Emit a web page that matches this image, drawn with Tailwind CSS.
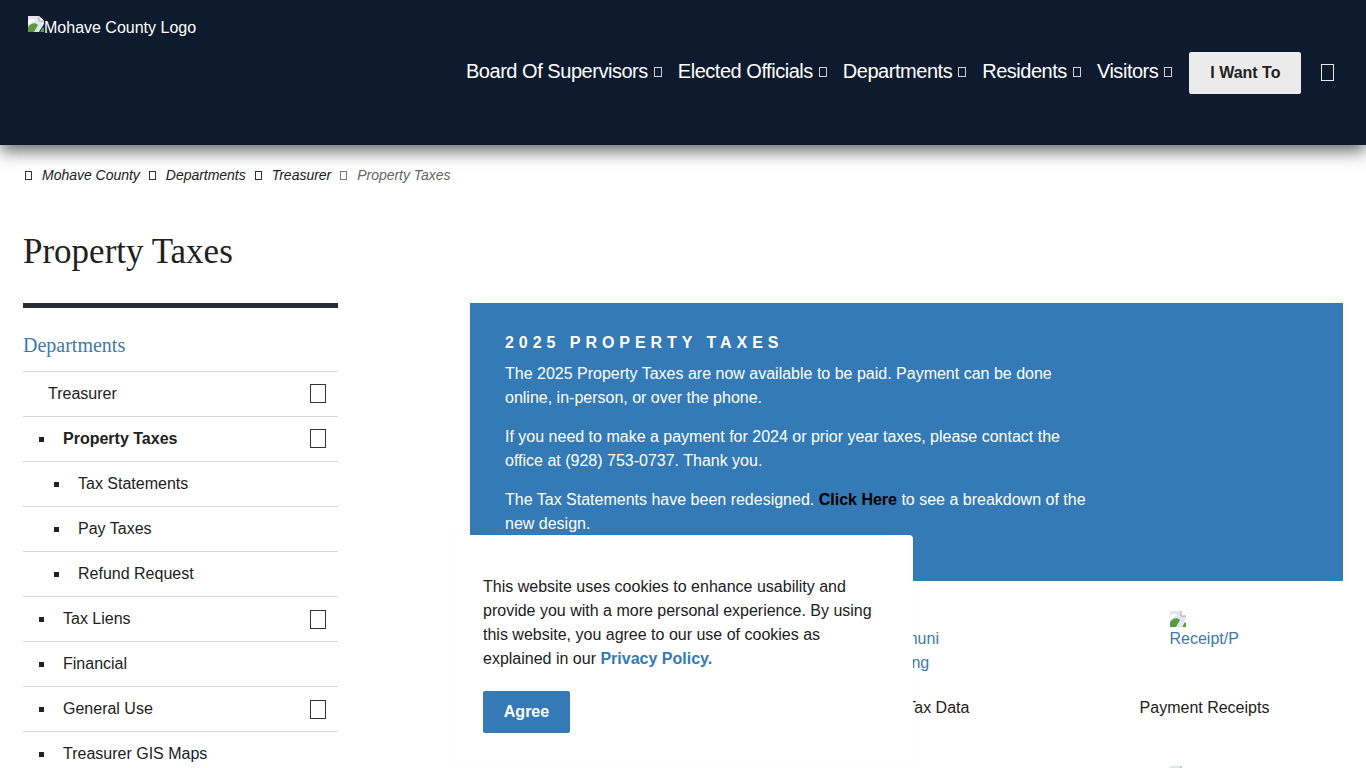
<!DOCTYPE html>
<html lang="en"><head><meta charset="utf-8"><title>Property Taxes</title>
<script src="https://cdn.jsdelivr.net/npm/@tailwindcss/browser@4"></script></head>
<body class="bg-white">
<svg class="hidden"><defs><symbol id="broken" viewBox="0 0 16 16"><path d="M0 0H11L16 5V8L11 16H0Z" fill="#dfe6f2"/><path d="M11 0V5H16Z" fill="#fff"/><path d="M11 0V5H16" fill="none" stroke="#a8a8a8"/><path d="M0 16V11C3 7 7 6 10 9L6 16Z" fill="#5b9a3f"/><path d="M0 5C3 2 7 3 8 5C5 5 2 7 0 9Z" fill="#fff"/><path d="M12 16L15 11L16 12V16Z" fill="#5b9a3f"/></symbol></defs></svg>
<div class="relative h-[768px] w-[1366px] overflow-hidden font-['Liberation_Sans',Arial,sans-serif] text-[16px] text-[#212121]">
  <header class="relative z-10 h-[145px] bg-[#0e1a2d] shadow-[0_6px_16px_rgba(0,0,0,0.6)]">
    <div class="flex items-start pl-[28px] pt-[16px] text-white">
      <svg class="h-4 w-4 shrink-0"><use href="#broken"/></svg><span class="mt-[1px] leading-[22px]">Mohave County Logo</span>
    </div>
    <nav class="absolute left-[466px] top-[52px] flex h-[42px] items-center text-[20px] tracking-[-0.47px] text-white">
      <a class="mb-[4px] flex items-center">Board Of Supervisors<span class="ml-[6px] mt-[2px] h-[10px] w-[8px] border border-white/80"></span></a>
      <a class="mb-[4px] ml-[16px] flex items-center">Elected Officials<span class="ml-[6px] mt-[2px] h-[10px] w-[8px] border border-white/80"></span></a>
      <a class="mb-[4px] ml-[16px] flex items-center">Departments<span class="ml-[6px] mt-[2px] h-[10px] w-[8px] border border-white/80"></span></a>
      <a class="mb-[4px] ml-[16px] flex items-center">Residents<span class="ml-[6px] mt-[2px] h-[10px] w-[8px] border border-white/80"></span></a>
      <a class="mb-[4px] ml-[16px] flex items-center">Visitors<span class="ml-[6px] mt-[2px] h-[10px] w-[8px] border border-white/80"></span></a>
      <a class="ml-[17px] flex h-[42px] w-[112px] items-center justify-center rounded-[2px] bg-[#ebebeb] text-[16px] font-bold tracking-normal text-[#212121]">I Want To</a>
      <span class="mb-[2px] ml-[20px] h-[17px] w-[13px] border border-white/90"></span>
    </nav>
  </header>

  <div class="flex h-[60px] items-center gap-[6px] pl-[25px] pt-[1px] text-[14px] italic tracking-[-0.02px] text-[#212121]">
    <span class="h-[9px] w-[7px] border border-[#333]"></span><a class="ml-[4px]">Mohave County</a>
    <span class="ml-[3px] h-[9px] w-[7px] border border-[#333]"></span><a class="ml-[4px]">Departments</a>
    <span class="ml-[3px] h-[9px] w-[7px] border border-[#333]"></span><a class="ml-[4px]">Treasurer</a>
    <span class="ml-[3px] h-[9px] w-[7px] border border-[#777]"></span><span class="ml-[4px] text-[#666]">Property Taxes</span>
  </div>

  <h1 class="ml-[23px] mt-[22px] font-['Liberation_Serif',serif] text-[35px] font-normal leading-[50px]">Property Taxes</h1>

  <div class="mt-[26px] flex items-start pl-[23px] pr-[23px]">
    <aside class="w-[315px] shrink-0 border-t-[5px] border-[#272c35]">
      <h2 class="h-[63px] pt-[25px] font-['Liberation_Serif',serif] text-[20px] font-normal leading-[24px] text-[#4079ab]">Departments</h2>
      <ul>
        <li class="flex h-[45px] items-center justify-between border-t border-[#d8d8d8] pl-[25px] pr-[12px]"><span>Treasurer</span><span class="mb-[2px] h-[19px] w-[16px] border border-[#333]"></span></li>
        <li class="flex h-[45px] items-center justify-between border-t border-[#d8d8d8] pl-[16px] pr-[12px]"><span class="flex items-center"><i class="mr-[19px] h-[5px] w-[5px] bg-[#222]"></i><b>Property Taxes</b></span><span class="mb-[2px] h-[19px] w-[16px] border border-[#333]"></span></li>
        <li class="flex h-[45px] items-center border-t border-[#d8d8d8] pl-[31px]"><i class="mr-[19px] h-[5px] w-[5px] bg-[#222]"></i>Tax Statements</li>
        <li class="flex h-[45px] items-center border-t border-[#d8d8d8] pl-[31px]"><i class="mr-[19px] h-[5px] w-[5px] bg-[#222]"></i>Pay Taxes</li>
        <li class="flex h-[45px] items-center border-t border-[#d8d8d8] pl-[31px]"><i class="mr-[19px] h-[5px] w-[5px] bg-[#222]"></i>Refund Request</li>
        <li class="flex h-[45px] items-center justify-between border-t border-[#d8d8d8] pl-[16px] pr-[12px]"><span class="flex items-center"><i class="mr-[19px] h-[5px] w-[5px] bg-[#222]"></i>Tax Liens</span><span class="h-[19px] w-[16px] border border-[#333]"></span></li>
        <li class="flex h-[45px] items-center border-t border-[#d8d8d8] pl-[16px]"><i class="mr-[19px] h-[5px] w-[5px] bg-[#222]"></i>Financial</li>
        <li class="flex h-[45px] items-center justify-between border-t border-[#d8d8d8] pl-[16px] pr-[12px]"><span class="flex items-center"><i class="mr-[19px] h-[5px] w-[5px] bg-[#222]"></i>General Use</span><span class="h-[19px] w-[16px] border border-[#333]"></span></li>
        <li class="flex h-[45px] items-center border-t border-[#d8d8d8] pl-[16px]"><i class="mr-[19px] h-[5px] w-[5px] bg-[#222]"></i>Treasurer GIS Maps</li>
      </ul>
    </aside>
    <main class="ml-[132px] w-[873px]">
      <section class="h-[278px] bg-[#337ab7] pl-[35px] pt-[31px] text-white">
        <h3 class="text-[16px] font-bold uppercase leading-[18px] tracking-[4.95px]">2025 Property Taxes</h3>
        <p class="mt-[10px] w-[585px] leading-[24px]">The 2025 Property Taxes are now available to be paid. Payment can be done online, in-person, or over the phone.</p>
        <p class="mt-[15px] w-[585px] leading-[24px]">If you need to make a payment for 2024 or prior year taxes, please contact the office at (928) 753-0737. Thank you.</p>
        <p class="mt-[15px] w-[585px] leading-[24px]">The Tax Statements have been redesigned. <b class="text-black">Click Here</b> to see a breakdown of the new design.</p>
      </section>
      <div class="-ml-[13px] grid w-[897px] grid-cols-3 pt-[30px]">
        <div class="h-[184px]"></div>
        <div class="flex h-[184px] flex-col items-center">
          <a class="block h-[60px] w-[70px] overflow-hidden leading-[24px] text-[#4079ab]"><svg class="block h-4 w-4"><use href="#broken"/></svg><span class="block whitespace-nowrap">Communi</span><span class="block">Housing</span></a>
          <span class="mt-[25px] leading-[24px]">Property Tax Data</span>
        </div>
        <div class="flex h-[184px] flex-col items-center">
          <a class="block h-[60px] w-[70px] overflow-hidden leading-[24px] text-[#4079ab]"><svg class="block h-4 w-4"><use href="#broken"/></svg><span class="block whitespace-nowrap">Receipt/P</span></a>
          <span class="mt-[25px] leading-[24px]">Payment Receipts</span>
          <div class="mt-[46px] w-[70px]"><svg class="block h-4 w-4"><use href="#broken"/></svg></div>
        </div>
      </div>
    </main>
  </div>

  <div class="absolute left-[453px] top-[535px] z-20 h-[231px] w-[460px] rounded-[4px] bg-white px-[30px] pt-[40px] shadow-[0_0_2px_rgba(0,0,0,0.06)]">
    <p class="leading-[24px]">This website uses cookies to enhance usability and provide you with a more personal experience. By using this website, you agree to our use of cookies as explained in our <a class="font-bold text-[#337ab7]">Privacy Policy.</a></p>
    <button class="mt-[20px] h-[42px] w-[87px] rounded-[2px] bg-[#337ab7] font-bold text-white">Agree</button>
  </div>
</div>
</body></html>
